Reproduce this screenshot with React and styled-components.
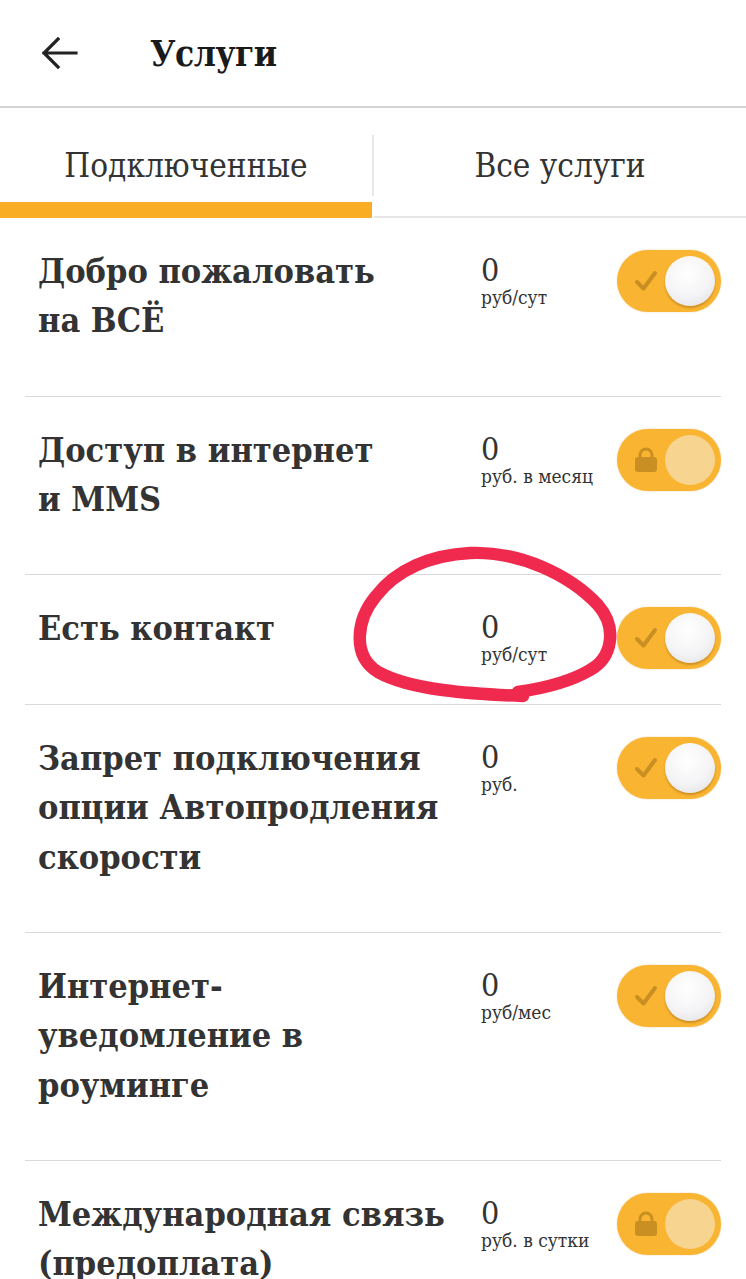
import React from 'react'
import styled, { createGlobalStyle } from 'styled-components'

const GlobalStyle = createGlobalStyle`
  body {
    margin: 0;
    background: #fff;
    font-family: "DejaVu Serif Condensed", "DejaVu Serif", serif;
    font-stretch: condensed;
    color: #333;
  }
`

const Page = styled.div`
  position: relative;
  width: 746px;
  overflow: hidden;
`

const Header = styled.header`
  display: flex;
  align-items: center;
  height: 108px;
  padding-left: 40px;
  border-bottom: 2px solid #d4d4d4;
  box-sizing: border-box;
`

const BackButton = styled.button`
  display: flex;
  border: none;
  background: none;
  padding: 0;
  margin-right: 72px;
  cursor: pointer;
`

const Title = styled.h1`
  margin: 0;
  font-size: 35px;
  font-weight: bold;
  color: #1a1a1a;
  letter-spacing: -0.5px;
`

const Tabs = styled.nav`
  display: flex;
  height: 110px;
`

const Tab = styled.div`
  flex: 1;
  display: flex;
  align-items: center;
  justify-content: center;
  font-size: 33px;
  color: #333;
  padding-top: 20px;
  padding-bottom: ${p => (p.$active ? '0' : '14px')};
  border-bottom: ${p => (p.$active ? '16px solid #f9ad25' : '2px solid #e6e6e6')};
`

const TabDivider = styled.div`
  width: 2px;
  margin: 27px 0 22px;
  background: #e8e8e8;
`

const List = styled.div`
  display: flex;
  flex-direction: column;
`

const Row = styled.div`
  display: grid;
  grid-template-columns: 1fr 136px 104px;
  align-items: start;
  margin: 0 25px;
  padding: 29px 0 35px 13px;
  border-top: ${p => (p.$first ? 'none' : '1px solid #d9d9d9')};
`

const Name = styled.div`
  font-size: 34px;
  font-weight: bold;
  line-height: 49.3px;
  padding-bottom: 15px;
  color: #333;
  white-space: nowrap;
`

const Price = styled.div`
  display: flex;
  flex-direction: column;
  padding-top: 7px;
`

const Amount = styled.span`
  font-size: 32px;
  line-height: 32px;
  color: #333;
`

const Unit = styled.span`
  font-size: 19px;
  line-height: 22px;
  color: #333;
  white-space: nowrap;
`

const Switch = styled.div`
  position: relative;
  width: 104px;
  height: 62px;
  margin-top: 3px;
  border-radius: 31px;
  background: #f9b431;
  display: flex;
  align-items: center;
  box-shadow: 0 0 2px rgba(200, 140, 20, 0.35);
`

const SwitchIcon = styled.div`
  width: 50px;
  display: flex;
  justify-content: center;
  padding-left: 4px;
`

const Knob = styled.div`
  position: absolute;
  right: 6px;
  top: 6px;
  width: 50px;
  height: 50px;
  border-radius: 50%;
  background: ${p =>
    p.$locked
      ? '#f8d491'
      : 'radial-gradient(circle at 45% 35%, #ffffff 0%, #f4f4f6 55%, #dcdce0 100%)'};
  box-shadow: ${p => (p.$locked ? 'none' : '0 2px 2px rgba(150, 100, 20, 0.45)')};
`

const Annotation = styled.svg`
  position: absolute;
  left: 0;
  top: 0;
  pointer-events: none;
`

const services = [
  { name: ['Добро пожаловать', 'на ВСЁ'], unit: 'руб/сут' },
  { name: ['Доступ в интернет', 'и MMS'], unit: 'руб. в месяц', locked: true },
  { name: ['Есть контакт'], unit: 'руб/сут' },
  { name: ['Запрет подключения', 'опции Автопродления', 'скорости'], unit: 'руб.' },
  { name: ['Интернет-', 'уведомление в', 'роуминге'], unit: 'руб/мес' },
  { name: ['Международная связь', '(предоплата)'], unit: 'руб. в сутки', locked: true },
]

function CheckIcon() {
  return (
    <svg width="24" height="22" viewBox="0 0 24 22">
      <path d="M3 12 L9.5 18.5 L21 3" fill="none" stroke="#c98f22" strokeWidth="4" strokeLinecap="round" strokeLinejoin="round" />
    </svg>
  )
}

function LockIcon() {
  return (
    <svg width="24" height="26" viewBox="0 0 24 26">
      <path d="M6 11 V8 a6 6 0 0 1 12 0 V11" fill="none" stroke="#c98f22" strokeWidth="3" />
      <rect x="1" y="10" width="22" height="15" rx="3" fill="#c98f22" />
    </svg>
  )
}

function Toggle({ locked }) {
  return (
    <Switch>
      <SwitchIcon>{locked ? <LockIcon /> : <CheckIcon />}</SwitchIcon>
      <Knob $locked={locked} />
    </Switch>
  )
}

export default function App() {
  return (
    <Page>
      <GlobalStyle />
      <Header>
        <BackButton>
          <svg width="38" height="34" viewBox="0 0 38 34">
            <path d="M36 17 H4 M18 3 L4 17 L18 31" fill="none" stroke="#222" strokeWidth="3.2" strokeLinecap="square" />
          </svg>
        </BackButton>
        <Title>Услуги</Title>
      </Header>
      <Tabs>
        <Tab $active>Подключенные</Tab>
        <TabDivider />
        <Tab>Все услуги</Tab>
      </Tabs>
      <List>
        {services.map((s, i) => (
          <Row key={i} $first={i === 0}>
            <Name>
              {s.name.map((line, j) => (
                <div key={j}>{line}</div>
              ))}
            </Name>
            <Price>
              <Amount>0</Amount>
              <Unit>{s.unit}</Unit>
            </Price>
            <Toggle locked={s.locked} />
          </Row>
        ))}
      </List>
      <Annotation width="746" height="1279">
        <path
          d="M523 696 C470 694 410 690 378 672 C352 656 356 620 376 596 C396 570 430 555 470 553 C520 551 570 575 598 605 C618 628 612 658 590 670 C570 682 545 688 518 692"
          fill="none"
          stroke="#f02a4e"
          strokeWidth="12.5"
          strokeLinecap="round"
          strokeLinejoin="round"
        />
      </Annotation>
    </Page>
  )
}
